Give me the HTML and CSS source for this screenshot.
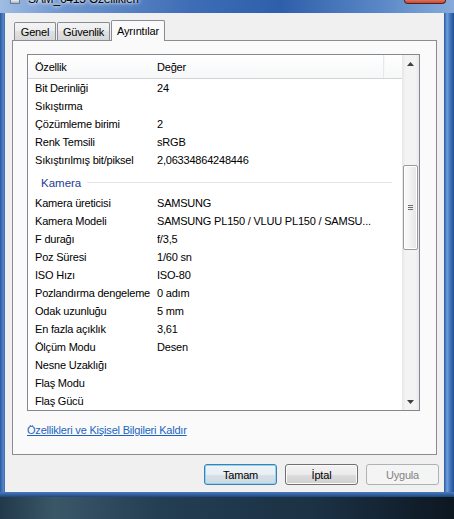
FILE: index.html
```html
<!DOCTYPE html>
<html lang="tr">
<head>
<meta charset="utf-8">
<title>SAM_6415 Özellikleri</title>
<link rel="stylesheet" href="styles.css">
</head>
<body>
<div class="window">
  <div class="titlebar">
    <div class="app-icon"></div>
    <div class="title">SAM_6415 Özellikleri</div>
    <div class="spacer"></div>
    <div class="close"></div>
  </div>
  <div class="middle">
    <div class="frame-left"></div>
    <div class="client">
      <div class="tabs">
        <div class="tab t-genel">Genel</div>
        <div class="tab t-guv">Güvenlik</div>
        <div class="tab t-ayr selected">Ayrıntılar</div>
      </div>
      <div class="panel">
        <div class="list">
          <div class="lv">
            <div class="lv-header">
              <div class="hc c1">Özellik</div>
              <div class="hc c2">Değer</div>
              <div class="hc c3"></div>
            </div>
            <div class="row"><div class="c1">Bit Derinliği</div><div class="c2">24</div></div>
            <div class="row"><div class="c1">Sıkıştırma</div><div class="c2"></div></div>
            <div class="row"><div class="c1">Çözümleme birimi</div><div class="c2">2</div></div>
            <div class="row"><div class="c1">Renk Temsili</div><div class="c2">sRGB</div></div>
            <div class="row"><div class="c1">Sıkıştırılmış bit/piksel</div><div class="c2">2,06334864248446</div></div>
            <div class="group"><span class="group-name">Kamera</span><span class="group-line"></span></div>
            <div class="row"><div class="c1">Kamera üreticisi</div><div class="c2">SAMSUNG</div></div>
            <div class="row"><div class="c1">Kamera Modeli</div><div class="c2">SAMSUNG PL150 / VLUU PL150 / SAMSU...</div></div>
            <div class="row"><div class="c1">F durağı</div><div class="c2">f/3,5</div></div>
            <div class="row"><div class="c1">Poz Süresi</div><div class="c2">1/60 sn</div></div>
            <div class="row"><div class="c1">ISO Hızı</div><div class="c2">ISO-80</div></div>
            <div class="row"><div class="c1">Pozlandırma dengeleme</div><div class="c2">0 adım</div></div>
            <div class="row"><div class="c1">Odak uzunluğu</div><div class="c2">5 mm</div></div>
            <div class="row"><div class="c1">En fazla açıklık</div><div class="c2">3,61</div></div>
            <div class="row"><div class="c1">Ölçüm Modu</div><div class="c2">Desen</div></div>
            <div class="row"><div class="c1">Nesne Uzaklığı</div><div class="c2"></div></div>
            <div class="row"><div class="c1">Flaş Modu</div><div class="c2"></div></div>
            <div class="row"><div class="c1">Flaş Gücü</div><div class="c2"></div></div>
          </div>
          <div class="scrollbar">
            <div class="sb-btn"><svg width="7" height="4" viewBox="0 0 7 4"><path d="M0 4 L3.5 0 L7 4 Z" fill="#404040"/></svg></div>
            <div class="sb-track">
              <div class="sb-before"></div>
              <div class="sb-thumb"><span class="grip"></span><span class="grip"></span><span class="grip"></span></div>
            </div>
            <div class="sb-btn"><svg width="7" height="4" viewBox="0 0 7 4"><path d="M0 0 L7 0 L3.5 4 Z" fill="#404040"/></svg></div>
          </div>
        </div>
        <a class="link" href="#">Özellikleri ve Kişisel Bilgileri Kaldır</a>
      </div>
      <div class="buttons">
        <button class="btn default">Tamam</button>
        <button class="btn">İptal</button>
        <button class="btn disabled">Uygula</button>
      </div>
    </div>
    <div class="frame-right"></div>
  </div>
  <div class="frame-bottom"></div>
  <div class="desktop"></div>
</div>
</body>
</html>
```
FILE: styles.css
```css
* { box-sizing: border-box; }
html, body { margin: 0; padding: 0; }
body {
  width: 454px;
  height: 519px;
  overflow: hidden;
  font-family: "Liberation Sans", Arial, sans-serif;
  font-size: 11px;
  letter-spacing: -0.2px;
  color: #000;
  background: #1b2f3f;
}
.window {
  width: 454px;
  height: 519px;
  display: flex;
  flex-direction: column;
}
.titlebar {
  height: 13px;
  display: flex;
  align-items: flex-start;
  overflow: hidden;
  background: linear-gradient(to right, #9fbde3 0%, #6d95cf 14%, #3e6db6 42%, #2f5fab 62%, #5a88c6 84%, #86abdb 100%);
}
.app-icon {
  width: 10px;
  height: 4px;
  margin-left: 10px;
  background: linear-gradient(#e8eef5, #a9b6c6);
  border: 1px solid #6a7c92;
  border-top: none;
}
.title {
  margin-left: 8px;
  margin-top: -8px;
  font-size: 12px;
  line-height: 14px;
  color: #000;
  text-shadow: 0 0 5px #fff, 0 0 3px #fff;
}
.spacer { flex: 1; }
.close {
  width: 42px;
  height: 4px;
  margin-right: 8px;
  background: linear-gradient(#d9735e, #c04a35);
  border: 1px solid #5a1f16;
  border-top: none;
  border-radius: 0 0 4px 4px;
}
.middle {
  flex: 1;
  display: flex;
}
.frame-left {
  width: 5px;
  background: linear-gradient(to right, #2a5aa2, #5286c8 70%, #3b69ad);
}
.frame-right {
  width: 10px;
  background: linear-gradient(to right, #27559a 0, #6ea0de 30%, #4576bc 60%, #1f4f96 100%);
}
.frame-bottom {
  height: 5px;
  background: linear-gradient(#4a7bc0, #1d467f);
}
.desktop {
  height: 22px;
  background: linear-gradient(to right, #22394b 0%, #3a5768 12%, #243e52 35%, #1b3144 70%, #0d1720 100%);
}
.client {
  width: 439px;
  background: #f0f0f0;
  padding: 7px 7px 0 7px;
  display: flex;
  flex-direction: column;
}
.tabs {
  height: 21px;
  margin-bottom: -1px;
  display: flex;
  align-items: flex-end;
  padding-left: 2px;
  position: relative;
  z-index: 1;
}
.tab {
  height: 18px;
  margin-bottom: 1px;
  margin-right: 1px;
  border: 1px solid #898c95;
  border-bottom: none;
  border-radius: 2px 2px 0 0;
  background: linear-gradient(#f4f4f4 0%, #ececec 50%, #e0e0e0 50%, #d7d7d7 100%);
  display: flex;
  align-items: center;
  justify-content: center;
  padding-top: 1px;
}
.t-genel { width: 42px; }
.t-guv { width: 53px; }
.t-ayr { width: 54px; }
.tab.selected {
  height: 21px;
  margin-bottom: 0;
  background: #fafafa;
  padding-bottom: 2px;
}
.panel {
  height: 415px;
  border: 1px solid #898c95;
  background: #fafafa;
  padding: 13px 16px 0 14px;
  display: flex;
  flex-direction: column;
}
.list {
  width: 393px;
  height: 357px;
  border: 1px solid #828790;
  background: #fff;
  display: flex;
  overflow: hidden;
}
.lv {
  flex: 1;
  display: flex;
  flex-direction: column;
}
.lv-header {
  height: 24px;
  flex: none;
  display: flex;
  border-bottom: 1px solid #d5d5d5;
  background: linear-gradient(#ffffff, #f6f7f8);
}
.hc {
  display: flex;
  align-items: center;
  padding-left: 7px;
}
.c1 { width: 122px; flex: none; padding-left: 7px; white-space: nowrap; }
.c2 { width: 234px; flex: none; padding-left: 7px; white-space: nowrap; overflow: hidden; }
.hc.c2 { border-right: 1px solid #e5e8ec; box-shadow: 1px 0 0 #f7f7f7; }
.hc.c3 { flex: 1; }
.row {
  height: 18px;
  flex: none;
  display: flex;
  align-items: center;
}
.group {
  height: 25px;
  flex: none;
  display: flex;
  align-items: center;
  padding-left: 13px;
  padding-right: 10px;
  padding-top: 2px;
}
.group-name {
  color: #1e3c96;
  font-size: 11.5px;
  letter-spacing: 0;
}
.group-line {
  flex: 1;
  height: 1px;
  margin-left: 6px;
  background: #e2e5ea;
}
.scrollbar {
  width: 17px;
  flex: none;
  display: flex;
  flex-direction: column;
  background: linear-gradient(to right, #e6e6e6 0%, #f3f3f3 20%, #f3f3f3 80%, #e8e8e8 100%);
}
.sb-btn {
  height: 17px;
  flex: none;
  display: flex;
  align-items: center;
  justify-content: center;
}
.sb-track {
  flex: 1;
  display: flex;
  flex-direction: column;
}
.sb-before { height: 93px; flex: none; }
.sb-thumb {
  height: 85px;
  margin: 0 1px;
  border: 1px solid #9a9a9a;
  border-radius: 2px;
  background: linear-gradient(to right, #fbfbfb 0%, #f1f1f1 50%, #e4e4e4 100%);
  box-shadow: inset 0 0 0 1px #ffffff;
  display: flex;
  flex-direction: column;
  align-items: center;
  justify-content: center;
  gap: 1px;
}
.grip {
  width: 5px;
  height: 1px;
  background: #6f6f6f;
}
.link {
  margin-top: 12px;
  align-self: flex-start;
  color: #1a64c0;
  text-decoration: underline;
  line-height: 14px;
}
.buttons {
  margin-top: 9px;
  margin-right: -2px;
  height: 21px;
  display: flex;
  justify-content: flex-end;
  gap: 8px;
}
.btn {
  width: 73px;
  height: 21px;
  padding: 0;
  font-family: "Liberation Sans", Arial, sans-serif;
  font-size: 11px;
  letter-spacing: -0.2px;
  color: #000;
  border: 1px solid #707070;
  border-radius: 3px;
  background: linear-gradient(#f2f2f2 0%, #ebebeb 50%, #dddddd 50%, #cfcfcf 100%);
  box-shadow: inset 0 0 0 1px #fbfbfb;
}
.btn.default {
  border-color: #3c7fb1;
  background: linear-gradient(#f0f4f7 0%, #e8eef2 50%, #d8e1e8 50%, #cdd8e1 100%);
  box-shadow: inset 0 0 0 1px #8fd3f5;
}
.btn.disabled {
  border-color: #adb2b5;
  background: #f4f4f4;
  color: #838383;
  box-shadow: none;
}
```
